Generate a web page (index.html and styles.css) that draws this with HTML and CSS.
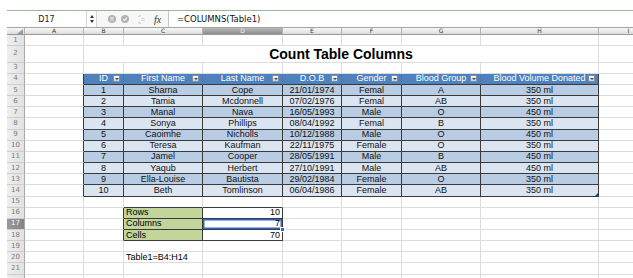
FILE: index.html
```html
<!DOCTYPE html>
<html>
<head>
<meta charset="utf-8">
<title>Count Table Columns</title>
<link rel="stylesheet" href="styles.css">
</head>
<body>
<div class="app">
  <div class="topgap"></div>
  <div class="rule"></div>
  <div class="fbar">
    <div class="namebox">D17</div>
    <div class="stepper"><svg width="4" height="8" viewBox="0 0 4 8"><polygon points="0,3 4,3 2,0" fill="#333"/><polygon points="0,5 4,5 2,8" fill="#333"/></svg></div>
    <div class="tools">
      <svg class="ic cancel" width="8" height="8" viewBox="0 0 8 8"><circle cx="4" cy="4" r="4" fill="#b3b3b3"/><path d="M2.5 2.5 L5.5 5.5 M5.5 2.5 L2.5 5.5" stroke="#f2f2f2" stroke-width="1.2"/></svg>
      <svg class="ic check" width="8" height="8" viewBox="0 0 8 8"><circle cx="4" cy="4" r="4" fill="#b3b3b3"/><path d="M2.2 4.2 L3.5 5.4 L5.9 2.6" stroke="#f2f2f2" stroke-width="1.2" fill="none"/></svg>
      <svg class="ic eq" width="8" height="9" viewBox="0 0 8 9"><path d="M3 0.5 A4 4 0 0 0 3 8.5" stroke="#c8c8c8" fill="none"/><path d="M3.5 3.6 H6.5 M3.5 5.4 H6.5" stroke="#c4c4c4" stroke-width="0.8"/></svg>
      <span class="fx">fx</span>
    </div>
    <div class="formula">=COLUMNS(Table1)</div>
  </div>
  <table class="sheet">
    <colgroup>
      <col class="w-rh"><col class="w-a"><col class="w-b"><col class="w-c"><col class="w-d"><col class="w-e"><col class="w-f"><col class="w-g"><col class="w-h"><col class="w-i">
    </colgroup>
    <tr class="ch"><th class="corner"><svg width="6" height="5" viewBox="0 0 6 5"><polygon points="6,0 6,5 0,5" fill="#9a9a9a"/></svg></th><th>A</th><th>B</th><th>C</th><th class="selcol">D</th><th>E</th><th>F</th><th>G</th><th>H</th><th>I</th></tr>
    <tr class="r"><th>1</th><td></td><td></td><td></td><td></td><td></td><td></td><td></td><td></td><td></td></tr>
    <tr class="r2"><th>2</th><td></td><td colspan="7" class="title">Count Table Columns</td><td></td></tr>
    <tr class="r"><th>3</th><td></td><td></td><td></td><td></td><td></td><td></td><td></td><td></td><td></td></tr>
    <tr class="r hr"><th>4</th><td class="lb"></td>
      <td class="hd"><div class="hc"><span>ID</span><i class="dd"></i></div></td>
      <td class="hd"><div class="hc"><span>First Name</span><i class="dd"></i></div></td>
      <td class="hd"><div class="hc"><span>Last Name</span><i class="dd"></i></div></td>
      <td class="hd"><div class="hc"><span>D.O.B</span><i class="dd"></i></div></td>
      <td class="hd"><div class="hc"><span>Gender</span><i class="dd"></i></div></td>
      <td class="hd"><div class="hc"><span>Blood Group</span><i class="dd"></i></div></td>
      <td class="hd last"><div class="hc"><span>Blood Volume Donated</span><i class="dd"></i></div></td>
      <td></td></tr>
    <tr class="r o"><th>5</th><td class="lb"></td><td class="c">1</td><td class="c">Sharna</td><td class="c">Cope</td><td class="c">21/01/1974</td><td class="c">Femal</td><td class="c">A</td><td class="c">350 ml</td><td></td></tr>
    <tr class="r e"><th>6</th><td class="lb"></td><td class="c">2</td><td class="c">Tamia</td><td class="c">Mcdonnell</td><td class="c">07/02/1976</td><td class="c">Femal</td><td class="c">AB</td><td class="c">350 ml</td><td></td></tr>
    <tr class="r o"><th>7</th><td class="lb"></td><td class="c">3</td><td class="c">Manal</td><td class="c">Nava</td><td class="c">16/05/1993</td><td class="c">Male</td><td class="c">O</td><td class="c">450 ml</td><td></td></tr>
    <tr class="r e"><th>8</th><td class="lb"></td><td class="c">4</td><td class="c">Sonya</td><td class="c">Phillips</td><td class="c">08/04/1992</td><td class="c">Femal</td><td class="c">B</td><td class="c">350 ml</td><td></td></tr>
    <tr class="r o"><th>9</th><td class="lb"></td><td class="c">5</td><td class="c">Caoimhe</td><td class="c">Nicholls</td><td class="c">10/12/1988</td><td class="c">Male</td><td class="c">O</td><td class="c">450 ml</td><td></td></tr>
    <tr class="r e"><th>10</th><td class="lb"></td><td class="c">6</td><td class="c">Teresa</td><td class="c">Kaufman</td><td class="c">22/11/1975</td><td class="c">Female</td><td class="c">O</td><td class="c">350 ml</td><td></td></tr>
    <tr class="r o"><th>11</th><td class="lb"></td><td class="c">7</td><td class="c">Jamel</td><td class="c">Cooper</td><td class="c">28/05/1991</td><td class="c">Male</td><td class="c">B</td><td class="c">450 ml</td><td></td></tr>
    <tr class="r e"><th>12</th><td class="lb"></td><td class="c">8</td><td class="c">Yaqub</td><td class="c">Herbert</td><td class="c">27/10/1991</td><td class="c">Male</td><td class="c">AB</td><td class="c">450 ml</td><td></td></tr>
    <tr class="r o"><th>13</th><td class="lb"></td><td class="c">9</td><td class="c">Ella-Louise</td><td class="c">Bautista</td><td class="c">29/02/1984</td><td class="c">Female</td><td class="c">O</td><td class="c">350 ml</td><td></td></tr>
    <tr class="r e"><th>14</th><td class="lb"></td><td class="c">10</td><td class="c">Beth</td><td class="c">Tomlinson</td><td class="c">06/04/1986</td><td class="c">Female</td><td class="c">AB</td><td class="c end">350 ml<span class="resize"></span></td><td></td></tr>
    <tr class="r"><th>15</th><td></td><td></td><td class="bb"></td><td class="bb"></td><td></td><td></td><td></td><td></td><td></td></tr>
    <tr class="r"><th>16</th><td></td><td class="rb"></td><td class="lbl">Rows</td><td class="val">10</td><td></td><td></td><td></td><td></td><td></td></tr>
    <tr class="r"><th class="selrow">17</th><td></td><td class="rb"></td><td class="lbl">Columns</td><td class="val sel">7<span class="handle"></span></td><td></td><td></td><td></td><td></td><td></td></tr>
    <tr class="r"><th>18</th><td></td><td class="rb"></td><td class="lbl">Cells</td><td class="val">70</td><td></td><td></td><td></td><td></td><td></td></tr>
    <tr class="r"><th>19</th><td></td><td></td><td></td><td></td><td></td><td></td><td></td><td></td><td></td></tr>
    <tr class="r"><th>20</th><td></td><td></td><td class="txt">Table1=B4:H14</td><td></td><td></td><td></td><td></td><td></td><td></td></tr>
    <tr class="r"><th>21</th><td></td><td></td><td></td><td></td><td></td><td></td><td></td><td></td><td></td></tr>
    <tr class="r"><th></th><td></td><td></td><td></td><td></td><td></td><td></td><td></td><td></td><td></td></tr>
  </table>
</div>
</body>
</html>
```
FILE: styles.css
```css
* { box-sizing: border-box; }
html, body { margin: 0; background: #fff; overflow: hidden; }
body { width: 633px; height: 278px; font-family: "Liberation Sans", Arial, sans-serif; color: #000; }

.app { margin-left: 7px; }
.topgap { height: 10px; }
.rule { height: 1px; background: #96b996; }

.fbar {
  display: flex;
  height: 17px;
  border-bottom: 1px solid #a3a3a3;
  background: #fff;
}
.namebox {
  width: 80px;
  display: flex;
  align-items: center;
  justify-content: center;
  font-family: "DejaVu Sans", sans-serif;
  font-size: 8px;
  color: #222;
  border-right: 1px solid #d4d4d4;
}
.stepper {
  width: 10px;
  display: flex;
  align-items: center;
  justify-content: center;
  border-right: 1px solid #d4d4d4;
}
.tools {
  width: 72px;
  display: flex;
  align-items: center;
  padding-left: 11px;
  background: #f7f7f7;
  border-right: 1px solid #c6c6c6;
}
.ic { display: block; flex: none; }
.check { margin-left: 5px; }
.eq { margin-left: 9px; }
.fx {
  margin-left: 8px;
  font-family: "Liberation Serif", serif;
  font-style: italic;
  font-size: 10px;
  color: #333;
}
.formula {
  flex: 1;
  display: flex;
  align-items: center;
  padding-left: 8px;
  font-family: "DejaVu Sans", sans-serif;
  font-size: 8.5px;
  color: #111;
}

.sheet {
  border-collapse: separate;
  border-spacing: 0;
  table-layout: fixed;
  width: 652px;
}
.w-rh { width: 18px; }
.w-a { width: 59px; }
.w-b { width: 40px; }
.w-c { width: 79px; }
.w-d { width: 80px; }
.w-e { width: 59px; }
.w-f { width: 60px; }
.w-g { width: 79px; }
.w-h { width: 118px; }
.w-i { width: 60px; }

.sheet th, .sheet td {
  padding: 0;
  border-right: 1px solid #dcdcdc;
  border-bottom: 1px solid #dcdcdc;
  white-space: nowrap;
  overflow: hidden;
  font-size: 9px;
  line-height: 9px;
  font-weight: normal;
}

.ch { height: 7px; }
.ch th {
  font-family: "DejaVu Sans", sans-serif;
  font-size: 6px;
  line-height: 6px;
  color: #333;
  background: linear-gradient(#f8f8f8, #dcdcdc);
  border-right: 1px solid #b4b4b4;
  border-bottom: 1px solid #9a9a9a;
  text-align: center;
}
.ch th.selcol { background: linear-gradient(#b9b9b9, #8e8e8e); color: #f4f4f4; }
.ch th.corner { text-align: right; vertical-align: bottom; }
.ch th.corner svg { display: block; margin-left: auto; margin-right: 1px; }

.r { height: 11.17px; }
.r2 { height: 16.5px; }

.r th, .r2 th {
  font-family: "DejaVu Sans", sans-serif;
  font-size: 7px;
  line-height: 7px;
  color: #7a7a7a;
  background: linear-gradient(90deg, #eeeeee, #e2e2e2);
  border-right: 1px solid #a9a9a9;
  border-bottom: 1px solid #cdcdcd;
  text-align: center;
}
.r th.selrow { background: linear-gradient(90deg, #9a9a9a, #848484); color: #fbfbfb; }

.sheet td.title {
  font-size: 14px;
  line-height: 15px;
  font-weight: bold;
  text-align: center;
  vertical-align: bottom;
}

.sheet td.lb { border-right-color: #3a3a3a; }

.sheet td.hd {
  background: #4f81bd;
  color: #fff;
  border-right-color: #4a7ab4;
  border-bottom-color: #3a3a3a;
}
.sheet td.hd.last { border-right-color: #3a3a3a; }
.hc {
  display: grid;
  grid-template-columns: 10px 1fr 10px;
  align-items: center;
}
.hc span { grid-column: 2; text-align: center; overflow: hidden; }
.dd {
  grid-column: 3;
  display: block;
  width: 7px;
  height: 7px;
  background: linear-gradient(#fbfbfb, #cfcfcf);
  border: 1px solid #7b8ea8;
  position: relative;
}
.dd::after {
  content: "";
  position: absolute;
  left: 1px;
  top: 2px;
  border-left: 2px solid transparent;
  border-right: 2px solid transparent;
  border-top: 2px solid #444;
}

.sheet td.c {
  text-align: center;
  border-right-color: #3a3a3a;
  border-bottom-color: #3a3a3a;
  color: #111;
}
.sheet .o td.c { background: #b8cce4; }
.sheet .e td.c { background: #dbe5f1; }
.sheet td.end { position: relative; }
.resize {
  position: absolute;
  right: 0;
  bottom: 0;
  width: 0;
  height: 0;
  border-left: 3px solid transparent;
  border-bottom: 3px solid #1f3f8f;
}

.sheet td.bb { border-bottom-color: #3a3a3a; }
.sheet td.rb { border-right-color: #3a3a3a; }
.sheet td.lbl {
  background: #c2d69b;
  padding-left: 2px;
  border-right-color: #3a3a3a;
  border-bottom-color: #3a3a3a;
}
.sheet td.val {
  text-align: right;
  padding-right: 2px;
  border-right-color: #3a3a3a;
  border-bottom-color: #3a3a3a;
}
.sheet td.sel {
  position: relative;
  overflow: visible;
  box-shadow: inset 0 0 0 1.5px #2d64d8;
}
.handle {
  position: absolute;
  right: -3px;
  bottom: -3px;
  width: 5px;
  height: 5px;
  background: #2d64d8;
  border: 1px solid #fff;
}
.sheet td.txt { padding-left: 2px; }
```
